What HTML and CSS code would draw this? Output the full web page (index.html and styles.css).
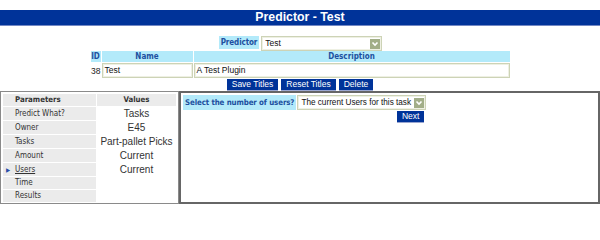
FILE: index.html
```html
<!DOCTYPE html>
<html>
<head>
<meta charset="utf-8">
<link rel="stylesheet" href="styles.css">
</head>
<body>
<div class="titlebar">Predictor - Test</div>

<div class="top">
  <div class="pred-row">
    <span class="hlabel">Predictor</span>
    <div class="fsel w120"><span class="fsel-text">Test</span><span class="fsel-arrow"><svg width="8" height="8" viewBox="0 0 8 8"><path d="M1.5 2.5 L4 5 L6.5 2.5" fill="none" stroke="#fff" stroke-width="1.6"/></svg></span></div>
  </div>

  <table class="plug">
    <tr class="head">
      <td class="c-id">ID</td>
      <td class="c-name">Name</td>
      <td class="c-desc">Description</td>
    </tr>
    <tr class="data">
      <td class="c-id num">38</td>
      <td><div class="finput">Test</div></td>
      <td><div class="finput">A Test Plugin</div></td>
    </tr>
  </table>

  <div class="btns">
    <span class="btn">Save Titles</span>
    <span class="btn">Reset Titles</span>
    <span class="btn">Delete</span>
  </div>
</div>

<div class="bottom">
  <div class="left">
    <table class="params">
      <tr class="phead"><td class="pcol">Parameters</td><td class="vcol">Values</td></tr>
      <tr><td class="pcol">Predict What?</td><td class="vcol val">Tasks</td></tr>
      <tr><td class="pcol">Owner</td><td class="vcol val">E45</td></tr>
      <tr><td class="pcol">Tasks</td><td class="vcol val">Part-pallet Picks</td></tr>
      <tr><td class="pcol">Amount</td><td class="vcol val">Current</td></tr>
      <tr><td class="pcol cur"><span class="marker">&#9654;</span><span class="ulink">Users</span></td><td class="vcol val">Current</td></tr>
      <tr class="short"><td class="pcol">Time</td><td class="vcol val"></td></tr>
      <tr class="short"><td class="pcol">Results</td><td class="vcol val"></td></tr>
    </table>
  </div>
  <div class="right">
    <table class="ask">
      <tr>
        <td class="hlabel q">Select the number of users?</td>
        <td><div class="fsel w128"><span class="fsel-text">The current Users for this task</span><span class="fsel-arrow"><svg width="8" height="8" viewBox="0 0 8 8"><path d="M1.5 2.5 L4 5 L6.5 2.5" fill="none" stroke="#fff" stroke-width="1.6"/></svg></span></div></td>
      </tr>
      <tr>
        <td colspan="2" class="next-cell"><span class="btn">Next</span></td>
      </tr>
    </table>
  </div>
</div>
</body>
</html>
```

FILE: styles.css
```css
html, body {
  margin: 0;
  padding: 0;
  background: #fff;
}
body {
  padding-top: 10px;
  font-family: "Liberation Sans", Arial, sans-serif;
  font-size: 8.5px;
  color: #222;
  width: 600px;
}
.titlebar {
  height: 15px;
  line-height: 15px;
  background: #003399;
  border-bottom: 1px solid #7388c4;
  color: #fff;
  font-weight: bold;
  font-size: 12.3px;
  text-align: center;
}
.top {
  padding-top: 10px;
}
.pred-row {
  display: flex;
  justify-content: center;
  align-items: flex-start;
  gap: 2px;
  height: 14px;
  padding-left: 1px;
}
.hlabel {
  background: #b3eafa;
  color: #2050a0;
  font-family: "DejaVu Sans Condensed", "DejaVu Sans", sans-serif;
  font-weight: bold;
  font-size: 8px;
  letter-spacing: -0.1px;
  height: 13px;
  line-height: 13px;
  padding: 0 2px;
  white-space: nowrap;
}
.fsel {
  display: flex;
  align-items: center;
  height: 11px;
  border: 1px solid #cdd3b6;
  box-shadow: inset 0 0 0 1px #eef0e3;
  background: #fff;
  padding: 1px 1px 1px 3px;
  box-sizing: content-box;
}
.w120 { width: 115px; }
.w128 { width: 123px; }
.fsel-text {
  flex: 1;
  font-size: 8.5px;
  color: #111;
  white-space: nowrap;
  overflow: hidden;
  line-height: 11px;
}
.w128 .fsel-text { font-size: 8.2px; }
.fsel-arrow {
  width: 10px;
  height: 10px;
  background: #a2ae88;
  display: flex;
  align-items: center;
  justify-content: center;
  flex: none;
}
.plug {
  margin: 0 auto;
  border-collapse: separate;
  border-spacing: 1px 1px;
  width: 421px;
}
.plug td {
  padding: 0;
}
.plug .head td {
  background: #b3eafa;
  color: #2050a0;
  font-family: "DejaVu Sans Condensed", "DejaVu Sans", sans-serif;
  font-weight: bold;
  font-size: 8px;
  text-align: center;
  height: 11px;
  line-height: 11px;
}
.plug .c-id { width: 10px; }
.plug .c-name { width: 91px; }
.plug .data td { height: 15px; }
.plug .num {
  font-size: 8.5px;
  text-align: right;
  color: #222;
}
.finput {
  height: 13px;
  line-height: 13px;
  border: 1px solid #cdd3b6;
  box-shadow: inset 0 0 0 1px #eef0e3;
  padding-left: 2px;
  font-size: 8.5px;
  color: #111;
  white-space: nowrap;
}
.btns {
  display: flex;
  justify-content: center;
  gap: 3px;
  height: 12px;
}
.btn {
  display: inline-block;
  background: #003399;
  color: #fff;
  font-size: 8.5px;
  height: 11px;
  line-height: 11px;
  padding: 0 5px;
  border-bottom: 1px solid #9aa6d0;
}
.bottom {
  display: flex;
  height: 113px;
}
.left {
  width: 175px;
  border: 1px solid #8a8a8a;
  padding: 1px;
  flex: none;
}
.params {
  width: 100%;
  border-collapse: separate;
  border-spacing: 1px;
}
.params td {
  padding: 0;
  height: 13px;
  line-height: 13px;
  white-space: nowrap;
}
.params .phead td {
  background: #ebebeb;
  font-family: "DejaVu Sans Condensed", "DejaVu Sans", sans-serif;
  font-weight: bold;
  font-size: 7.8px;
  color: #333;
  height: 12px;
  line-height: 12px;
}
.params .phead .vcol { text-align: center; }
.params .short td { height: 12px; line-height: 12px; }
.pcol {
  width: 81px;
  background: #ebebeb;
  padding-left: 12px !important;
  font-family: "DejaVu Sans Condensed", "DejaVu Sans", sans-serif;
  font-size: 8px;
  color: #333;
  position: relative;
}
.vcol {
  text-align: center;
}
.val {
  font-family: "Liberation Sans", Arial, sans-serif;
  font-size: 10px;
  color: #333;
  background: #fff;
}
.marker {
  position: absolute;
  left: 3px;
  top: 0;
  font-size: 6px;
  color: #2a4ea8;
}
.ulink {
  text-decoration: underline;
  color: #333;
}
.right {
  flex: 1;
  border: 2px solid #666;
  padding: 1px;
}
.ask {
  border-collapse: separate;
  border-spacing: 1px 1px;
}
.ask td { padding: 0; }
.ask .q {
  height: 12px;
  line-height: 12px;
  padding: 0 2px;
  font-size: 7.85px;
}
.next-cell {
  text-align: right;
  padding-right: 2px !important;
}
```
